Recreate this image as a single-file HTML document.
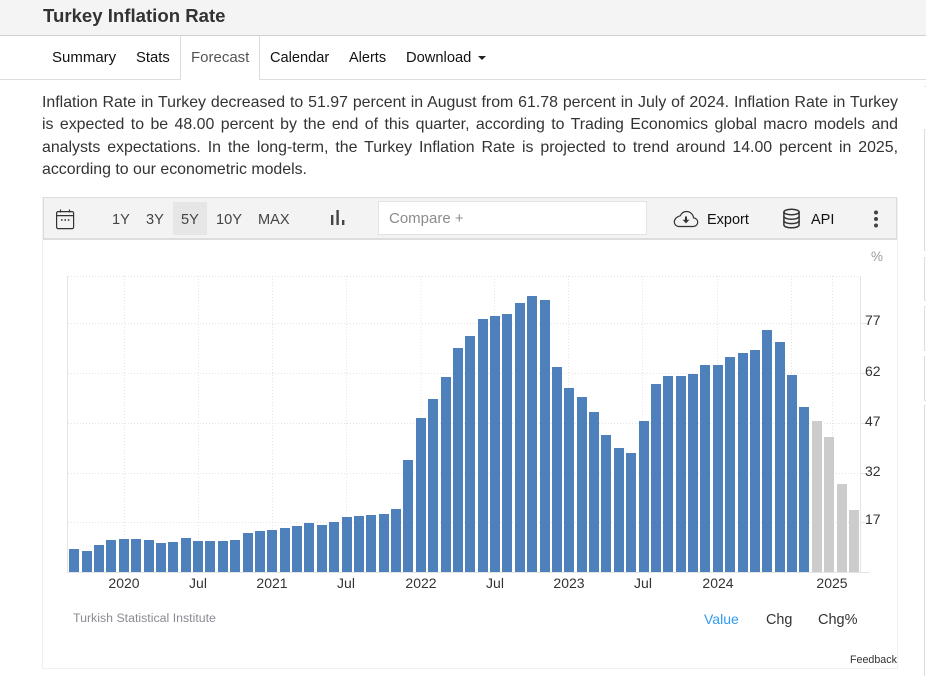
<!DOCTYPE html>
<html lang="en">
<head>
<meta charset="utf-8">
<title>Turkey Inflation Rate</title>
<style>
html,body{margin:0;padding:0;background:#fff;width:926px;height:676px;overflow:hidden}
body{position:relative;font-family:"Liberation Sans",Arial,sans-serif;color:#333}
.a{position:absolute;white-space:nowrap}
#head{left:0;top:0;width:926px;height:35px;background:#f4f4f4;border-bottom:1px solid #d0d0d0}
#title{left:43px;top:5px;font-size:18.6px;font-weight:bold;line-height:21px;color:#333}
#navline{left:0;top:79px;width:926px;height:1px;background:#ddd}
#ftab{left:180px;top:36px;width:78px;height:44px;background:#fff;border-left:1px solid #ddd;border-right:1px solid #ddd}
.nav{top:49px;font-size:14.5px;line-height:18px;color:#111}
#caret{left:478px;top:56px;width:0;height:0;border-left:4px solid transparent;border-right:4px solid transparent;border-top:4px solid #222}
#para{left:42px;top:92px;width:856px;font-size:15.9px;line-height:22.4px;text-align:justify;color:#333;white-space:normal}
#frame{left:42px;top:197px;width:854px;height:470px;border:1px solid #f0f0f0}
#bar{left:43px;top:197px;width:852px;height:40px;background:#f3f3f3;border:1px solid #ddd;border-width:1px 1px 2px 1px}
#active{left:173px;top:202px;width:34px;height:33px;background:#e6e6e6}
.rng{top:211px;font-size:14.6px;line-height:18px;color:#444}
#cmp{left:378px;top:201px;width:267px;height:32px;background:#fff;border:1px solid #e3e3e3}
#cmpt{left:389px;top:210px;font-size:15px;line-height:18px;color:#8c8c8c}
.tool{top:211px;font-size:14.5px;line-height:18px;color:#111}
.xl{top:575px;font-size:14px;line-height:16px;color:#333;transform:translateX(-50%)}
.yl{left:865px;font-size:14px;line-height:16px;color:#333}
.side{left:924px;width:2px;background:#fff;border-left:1px solid #ddd;border-top:1px solid #e8e8e8;border-bottom:1px solid #e8e8e8}
</style>
</head>
<body>
<div class="a" id="head"></div>
<div class="a" id="title">Turkey Inflation Rate</div>
<div class="a" id="navline"></div>
<div class="a" id="ftab"></div>
<div class="a nav" style="left:52px;font-size:15px">Summary</div>
<div class="a nav" style="left:136px;font-size:14.8px">Stats</div>
<div class="a nav" style="left:191px;color:#555;font-size:15px">Forecast</div>
<div class="a nav" style="left:270px;font-size:14.6px">Calendar</div>
<div class="a nav" style="left:349px">Alerts</div>
<div class="a nav" style="left:406px;font-size:14.7px">Download</div>
<div class="a" id="caret"></div>

<div class="a" id="para">Inflation Rate in Turkey decreased to 51.97 percent in August from 61.78 percent in July of 2024. Inflation Rate in Turkey is expected to be 48.00 percent by the end of this quarter, according to Trading Economics global macro models and analysts expectations. In the long-term, the Turkey Inflation Rate is projected to trend around 14.00 percent in 2025, according to our econometric models.</div>

<div class="a side" style="top:86px;height:0;border-bottom:0;border-left:0"></div>
<div class="a side" style="top:129px;height:120px"></div>
<div class="a side" style="top:257px;height:42px"></div>
<div class="a side" style="top:306px;height:43px"></div>
<div class="a side" style="top:356px;height:43px"></div>
<div class="a side" style="top:405px;height:271px;border-bottom:0"></div>

<div class="a" id="frame"></div>
<div class="a" id="bar"></div>
<div class="a" id="active"></div>

<svg class="a" style="left:54px;top:207px" width="22" height="24" viewBox="0 0 22 24" fill="none" stroke="#333" stroke-width="1.2">
<rect x="2.6" y="4.6" width="17" height="17" rx="1.5"/>
<path d="M2.6 8.6H19.6M6.5 2.5V5.5M15.5 2.5V5.5"/>
<path d="M7 13h1.6M10.4 13h1.6M13.8 13h1.6" stroke-width="1.6"/>
</svg>

<div class="a rng" style="left:112px">1Y</div>
<div class="a rng" style="left:146px">3Y</div>
<div class="a rng" style="left:181px">5Y</div>
<div class="a rng" style="left:216px">10Y</div>
<div class="a rng" style="left:258px">MAX</div>

<svg class="a" style="left:330px;top:209px" width="16" height="17" viewBox="0 0 16 17" fill="#444">
<rect x="1" y="6" width="2.4" height="10"/>
<rect x="6.4" y="1" width="2.4" height="15"/>
<rect x="12" y="11" width="2.4" height="5"/>
</svg>

<div class="a" id="cmp"></div>
<div class="a" id="cmpt">Compare +</div>

<svg class="a" style="left:673px;top:208px" width="26" height="20" viewBox="0 0 26 20" fill="none" stroke="#333" stroke-width="1.2">
<path d="M6 18.5H20C23 18.5 24.7 16.4 24.7 14.2C24.7 11.9 23 10.1 20.6 9.9C20 6.1 17.1 3.5 13.6 3.5C10.8 3.5 8.5 5.1 7.4 7.7C3.8 8.6 1.3 11 1.3 13.8C1.3 16.4 3.3 18.5 6 18.5Z"/>
<path d="M13 8.5V13" stroke-width="2"/>
<path d="M9.6 11.8H16.4L13 15.4Z" fill="#333" stroke="none"/>
</svg>
<div class="a tool" style="left:707px">Export</div>

<svg class="a" style="left:782px;top:208px" width="19" height="21" viewBox="0 0 19 21" fill="none" stroke="#333" stroke-width="1.5">
<ellipse cx="9.5" cy="4" rx="7.6" ry="2.8"/>
<path d="M1.9 4V17C1.9 18.6 5.3 19.8 9.5 19.8S17.1 18.6 17.1 17V4"/>
<path d="M1.9 8.4C1.9 10 5.3 11.2 9.5 11.2S17.1 10 17.1 8.4"/>
<path d="M1.9 12.8C1.9 14.4 5.3 15.6 9.5 15.6S17.1 14.4 17.1 12.8"/>
</svg>
<div class="a tool" style="left:811px">API</div>

<svg class="a" style="left:871px;top:209px" width="10" height="20" viewBox="0 0 10 20" fill="#444">
<circle cx="5" cy="3.5" r="2"/><circle cx="5" cy="10" r="2"/><circle cx="5" cy="16.5" r="2"/>
</svg>

<div class="a" style="left:871px;top:249px;font-size:13.5px;line-height:16px;color:#a09a96">%</div>

<svg class="a" style="left:0;top:0" width="926" height="676" viewBox="0 0 926 676">
<g stroke="#e4e4e4" stroke-width="1" stroke-dasharray="1 2" fill="none">
<path d="M68 276.5H860M68 323.5H860M68 373.5H860M68 423.5H860M68 473.5H860M68 522.5H860"/>
<path d="M124.5 276V572M198.5 276V572M272.5 276V572M346.5 276V572M421 276V572M494.5 276V572M568.5 276V572M642.5 276V572M717.5 276V572M791.5 276V572M832.5 276V572"/>
</g>
<path d="M860 323.5H870M860 373.5H870M860 423.5H870M860 473.5H870M860 522.5H870" stroke="#e6e6e6" fill="none"/>
<path d="M67.5 276V573M860.5 276V573M67 572.5H870" stroke="#e4e4e4" fill="none"/>
<g fill="#4e80bc">
<rect x="69" y="549" width="10" height="23"/>
<rect x="82" y="551" width="10" height="21"/>
<rect x="94" y="545" width="10" height="27"/>
<rect x="106" y="540" width="10" height="32"/>
<rect x="119" y="539" width="10" height="33"/>
<rect x="131" y="539" width="10" height="33"/>
<rect x="144" y="540" width="10" height="32"/>
<rect x="156" y="543" width="10" height="29"/>
<rect x="168" y="542" width="10" height="30"/>
<rect x="181" y="538" width="10" height="34"/>
<rect x="193" y="541" width="10" height="31"/>
<rect x="205" y="541" width="10" height="31"/>
<rect x="218" y="541" width="10" height="31"/>
<rect x="230" y="540" width="10" height="32"/>
<rect x="243" y="533" width="10" height="39"/>
<rect x="255" y="531" width="10" height="41"/>
<rect x="267" y="530" width="10" height="42"/>
<rect x="280" y="528" width="10" height="44"/>
<rect x="292" y="526" width="10" height="46"/>
<rect x="304" y="523" width="10" height="49"/>
<rect x="317" y="525" width="10" height="47"/>
<rect x="329" y="522" width="10" height="50"/>
<rect x="342" y="517" width="10" height="55"/>
<rect x="354" y="516" width="10" height="56"/>
<rect x="366" y="515" width="10" height="57"/>
<rect x="379" y="514" width="10" height="58"/>
<rect x="391" y="509" width="10" height="63"/>
<rect x="403" y="460" width="10" height="112"/>
<rect x="416" y="418" width="10" height="154"/>
<rect x="428" y="399" width="10" height="173"/>
<rect x="441" y="377" width="10" height="195"/>
<rect x="453" y="348" width="10" height="224"/>
<rect x="465" y="336" width="10" height="236"/>
<rect x="478" y="319" width="10" height="253"/>
<rect x="490" y="316" width="10" height="256"/>
<rect x="502" y="314" width="10" height="258"/>
<rect x="515" y="303" width="10" height="269"/>
<rect x="527" y="296" width="10" height="276"/>
<rect x="540" y="300" width="10" height="272"/>
<rect x="552" y="367" width="10" height="205"/>
<rect x="564" y="388" width="10" height="184"/>
<rect x="577" y="397" width="10" height="175"/>
<rect x="589" y="412" width="10" height="160"/>
<rect x="601" y="435" width="10" height="137"/>
<rect x="614" y="448" width="10" height="124"/>
<rect x="626" y="453" width="10" height="119"/>
<rect x="639" y="421" width="10" height="151"/>
<rect x="651" y="384" width="10" height="188"/>
<rect x="663" y="376" width="10" height="196"/>
<rect x="676" y="376" width="10" height="196"/>
<rect x="688" y="374" width="10" height="198"/>
<rect x="700" y="365" width="10" height="207"/>
<rect x="713" y="365" width="10" height="207"/>
<rect x="725" y="357" width="10" height="215"/>
<rect x="738" y="353" width="10" height="219"/>
<rect x="750" y="350" width="10" height="222"/>
<rect x="762" y="330" width="10" height="242"/>
<rect x="775" y="342" width="10" height="230"/>
<rect x="787" y="375" width="10" height="197"/>
<rect x="799" y="407" width="10" height="165"/>
</g>
<g fill="#cccccc">
<rect x="812" y="421" width="10" height="151"/>
<rect x="824" y="437" width="10" height="135"/>
<rect x="837" y="484" width="10" height="88"/>
<rect x="849" y="510" width="10" height="62"/>
</g>
</svg>

<div class="a yl" style="top:312px">77</div>
<div class="a yl" style="top:363px">62</div>
<div class="a yl" style="top:413px">47</div>
<div class="a yl" style="top:463px">32</div>
<div class="a yl" style="top:511px">17</div>

<div class="a xl" style="left:124px">2020</div>
<div class="a xl" style="left:198px">Jul</div>
<div class="a xl" style="left:272px">2021</div>
<div class="a xl" style="left:346px">Jul</div>
<div class="a xl" style="left:421px">2022</div>
<div class="a xl" style="left:495px">Jul</div>
<div class="a xl" style="left:569px">2023</div>
<div class="a xl" style="left:643px">Jul</div>
<div class="a xl" style="left:718px">2024</div>
<div class="a xl" style="left:832px">2025</div>

<div class="a" style="left:73px;top:611px;font-size:12.35px;line-height:15px;color:#8a8a94">Turkish Statistical Institute</div>
<div class="a" style="left:704px;top:611px;font-size:14px;line-height:16px;color:#2f9bf0">Value</div>
<div class="a" style="left:766px;top:612px;font-size:14.4px;line-height:16px;color:#333">Chg</div>
<div class="a" style="left:818px;top:612px;font-size:14.5px;line-height:16px;color:#333">Chg%</div>
<div class="a" style="left:850px;top:653px;font-size:10.7px;line-height:14px;color:#333">Feedback</div>
</body>
</html>
